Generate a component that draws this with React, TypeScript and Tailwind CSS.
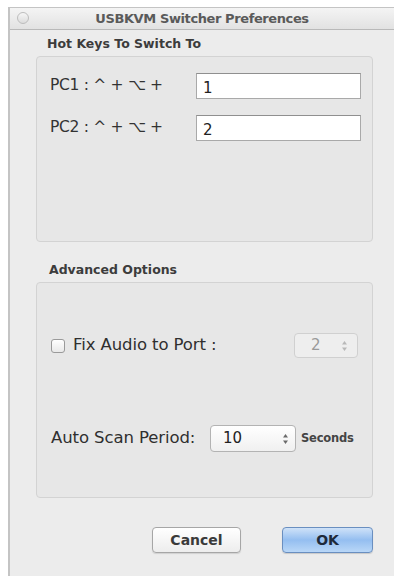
import { useState } from 'react'

function Arrows({ className = '' }: { className?: string }) {
  return (
    <svg width="7" height="12" viewBox="0 0 7 12" className={className}>
      <path d="M3.5 1 L6 4.5 H1 Z" fill="#6a6a6a" />
      <path d="M3.5 11 L6 7.5 H1 Z" fill="#6a6a6a" />
    </svg>
  )
}

export default function App() {
  const [pc1, setPc1] = useState('1')
  const [pc2, setPc2] = useState('2')
  const [fixAudio, setFixAudio] = useState(false)

  return (
    <div className="w-[398px] h-[576px] bg-white overflow-hidden" style={{ fontFamily: '"DejaVu Sans", "Open Sans", sans-serif' }}>
      <div className="ml-[8px] mt-[7px] w-[386px] h-[580px] bg-[#ececec] border-l-2 border-[#5e5e5e] border-t border-[#c4c4c4] flex flex-col">
        {/* Title bar */}
        <div className="relative h-[22px] flex items-center justify-center bg-gradient-to-b from-[#f4f4f4] to-[#e2e2e2] border-b border-[#b9b9b9]">
          <div className="absolute left-[7px] top-[4px] w-[12px] h-[12px] rounded-full border border-[#bdbdbd] bg-gradient-to-b from-[#f6f6f6] to-[#dcdcdc]" />
          <span className="text-[13px] text-[#5a5a5a] font-semibold tracking-[-0.4px]">USBKVM Switcher Preferences</span>
        </div>

        <div className="pl-[26px] pr-[21px]">
          {/* Hot keys */}
          <div className="pt-[6px] pl-[11px] text-[12.5px] font-semibold text-[#3c3c3c] leading-[16px]">Hot Keys To Switch To</div>
          <div className="mt-[4px] h-[186px] rounded-[4px] border border-[#d3d3d3] bg-[#e7e7e7] pt-[16px] pl-[13px] pr-[10px]">
            <div className="flex items-center">
              <span className="w-[146px] text-[15.5px] text-[#333] tracking-[-0.3px]">PC1 : ^ + ⌥ +</span>
              <input
                value={pc1}
                onChange={(e) => setPc1(e.target.value)}
                className="w-[165px] h-[26px] bg-white border border-[#a9a9a9] border-t-[#8f8f8f] pl-[6px] pt-[3px] text-[15px] text-[#222] outline-none"
              />
            </div>
            <div className="flex items-center mt-[16px]">
              <span className="w-[146px] text-[15.5px] text-[#333] tracking-[-0.3px]">PC2 : ^ + ⌥ +</span>
              <input
                value={pc2}
                onChange={(e) => setPc2(e.target.value)}
                className="w-[165px] h-[26px] bg-white border border-[#a9a9a9] border-t-[#8f8f8f] pl-[6px] pt-[3px] text-[15px] text-[#222] outline-none"
              />
            </div>
          </div>

          {/* Advanced */}
          <div className="mt-[20px] pl-[13px] text-[12.5px] font-semibold text-[#3c3c3c] leading-[16px]">Advanced Options</div>
          <div className="mt-[4px] h-[216px] rounded-[4px] border border-[#d3d3d3] bg-[#e7e7e7] pl-[14px] pr-[14px]">
            <div className="mt-[50px] flex items-center">
              <button
                onClick={() => setFixAudio(!fixAudio)}
                className="w-[14px] h-[14px] rounded-[3px] border border-[#9a9a9a] bg-gradient-to-b from-white to-[#e9e9e9] flex items-center justify-center text-[10px] leading-none"
              >
                {fixAudio ? '✓' : ''}
              </button>
              <span className="ml-[8px] text-[16.5px] text-[#2f2f2f] tracking-[-0.1px]">Fix Audio to Port :</span>
              <div className="ml-auto w-[64px] h-[25px] rounded-[4px] border border-[#d0d0d0] bg-[#eeeeee] flex items-center pl-[16px] pr-[9px]">
                <span className="text-[15px] text-[#9a9a9a]">2</span>
                <Arrows className="ml-auto opacity-40" />
              </div>
            </div>
            <div className="mt-[67px] flex items-center">
              <span className="w-[159px] text-[16.5px] text-[#2f2f2f] tracking-[-0.1px]">Auto Scan Period:</span>
              <div className="w-[86px] h-[27px] rounded-[4px] border border-[#b3b3b3] bg-gradient-to-b from-white to-[#f0f0f0] flex items-center pl-[12px] pr-[6px]">
                <span className="text-[15px] text-[#222]">10</span>
                <Arrows className="ml-auto" />
              </div>
              <span className="ml-[5px] text-[11.5px] font-semibold text-[#444] tracking-[-0.2px]">Seconds</span>
            </div>
          </div>

          {/* Buttons */}
          <div className="mt-[29px] flex justify-end gap-[41px]">
            <button className="w-[89px] h-[26px] rounded-[4px] border border-[#a6a6a6] bg-gradient-to-b from-white to-[#ededed] text-[14px] font-semibold text-[#3a3a3a] shadow-[0_1px_1px_rgba(0,0,0,0.12)]">
              Cancel
            </button>
            <button className="w-[91px] h-[26px] rounded-[4px] border border-[#6a8fc0] bg-gradient-to-b from-[#cfe2f8] via-[#94bef0] to-[#b9d7f7] text-[14px] font-semibold text-[#1e2a3a] shadow-[0_1px_1px_rgba(0,0,0,0.15)]">
              OK
            </button>
          </div>
        </div>
      </div>
    </div>
  )
}
